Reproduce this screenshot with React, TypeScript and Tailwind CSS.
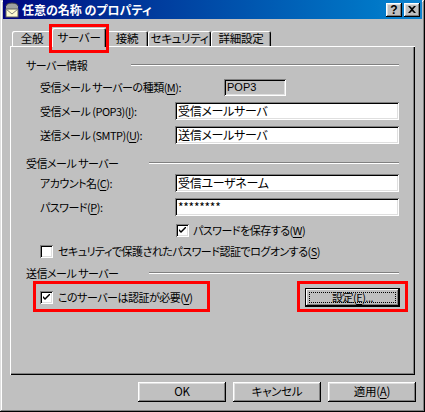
import React from 'react';

const font = "[font-family:'Noto_Sans_CJK_JP',sans-serif] [font-feature-settings:'palt']";

const raised =
  'shadow-[inset_-1px_-1px_#000,inset_1px_1px_#fff,inset_-2px_-2px_#808080,inset_2px_2px_#dfdfdf]';
const sunken =
  'shadow-[inset_1px_1px_#808080,inset_-1px_-1px_#fff,inset_2px_2px_#000,inset_-2px_-2px_#dfdfdf]';

const U = ({ children }: { children: React.ReactNode }) => <span className="underline underline-offset-2">{children}</span>;

const GroupHead = ({ label, w }: { label: string; w: string }) => (
  <div className="flex items-center h-[14px] pl-[16px]">
    <span className={`${w} shrink-0 leading-[14px]`}>{label}</span>
    <div className="h-[2px] flex-1 mr-[16px] border-t border-[#808080] border-b border-b-white" />
  </div>
);

const Input = ({ value }: { value: string }) => (
  <div className={`w-[224px] h-[18px] bg-white ${sunken} pl-[3px] leading-[18px] text-[12px] tracking-[-0.3px] overflow-hidden whitespace-nowrap`}>{value}</div>
);

const Check = ({ checked }: { checked: boolean }) => (
  <div className={`w-[13px] h-[13px] bg-white shrink-0 ${sunken} flex items-center justify-center`}>
    {checked && (
      <svg width="7" height="7" viewBox="0 0 7 7">
        <path d="M0 2 L0 4 L2 6 L7 1 L7 -1 L2 4 Z" fill="#000" />
      </svg>
    )}
  </div>
);

const FieldRow = ({ label, children, mt }: { label: React.ReactNode; children: React.ReactNode; mt: string }) => (
  <div className={`flex items-center ${mt} pl-[30px]`}>
    <span className="w-[135px] shrink-0 whitespace-nowrap">{label}</span>
    {children}
  </div>
);

const tabs = [
  { label: '全般', w: 'w-[40px]' },
  { label: 'サーバー', w: 'w-[54px]', active: true },
  { label: '接続', w: 'w-[42px]' },
  { label: 'セキュリティ', w: 'w-[63px]' },
  { label: '詳細設定', w: 'w-[60px]' },
];

export default function App() {
  return (
    <div
      className={`relative w-[425px] h-[412px] bg-[#c0c0c0] text-[11px] tracking-[-0.5px] text-black ${font} flex flex-col shadow-[inset_-1px_-1px_#000,inset_1px_1px_#dfdfdf,inset_-2px_-2px_#808080,inset_2px_2px_#fff] overflow-hidden`}
    >
      {/* title bar */}
      <div className="mx-[3px] h-[19px] bg-gradient-to-r from-[#000080] to-[#1084d0] flex items-center pl-[1px] pr-[2px]">
        <svg width="16" height="16" viewBox="0 0 16 16" className="shrink-0">
          <ellipse cx="8" cy="4" rx="6" ry="3" fill="#a0a0a0" stroke="#404040" />
          <rect x="2" y="4" width="12" height="3" fill="#a0a0a0" />
          <rect x="2" y="7" width="12" height="8" fill="#fffbd0" stroke="#606060" />
          <path d="M2 7 L8 12 L14 7" fill="none" stroke="#808080" />
        </svg>
        <span className="ml-[2px] text-white font-bold text-[12px] tracking-normal leading-[19px] whitespace-nowrap">任意の名称 のプロパティ</span>
        <div className="flex-1" />
        <div className={`w-[16px] h-[14px] bg-[#c0c0c0] ${raised} flex items-center justify-center font-bold text-[12px] tracking-normal leading-none [font-family:'Liberation_Sans',sans-serif]`}>?</div>
        <div className={`ml-[2px] w-[16px] h-[14px] bg-[#c0c0c0] ${raised} flex items-center justify-center`}>
          <svg width="8" height="7" viewBox="0 0 8 7">
            <path d="M0 0h2l2 2 2-2h2L5 3.5 8 7H6L4 5 2 7H0l3-3.5Z" fill="#000" />
          </svg>
        </div>
      </div>

      {/* tabs */}
      <div className="px-[10px] mt-[9px]">
        <div className="flex items-end h-[18px] pl-[2px] text-[11.5px] tracking-[-0.3px]">
          {tabs.map((t) =>
            t.active ? (
              <div
                key={t.label}
                className={`${t.w} h-[19px] -mb-[1px] z-10 relative bg-[#c0c0c0] rounded-t-[2px] shadow-[inset_1px_1px_#fff,inset_-1px_0_#000,inset_-2px_0_#808080] flex items-center justify-center leading-none whitespace-nowrap`}
              >
                {t.label}
              </div>
            ) : (
              <div
                key={t.label}
                className={`${t.w} h-[15px] bg-[#c0c0c0] rounded-t-[2px] shadow-[inset_1px_1px_#fff,inset_-1px_0_#000,inset_-2px_0_#808080] flex items-center justify-center leading-none whitespace-nowrap`}
              >
                {t.label}
              </div>
            )
          )}
        </div>

        {/* panel */}
        <div className="relative h-[329px] shadow-[inset_1px_1px_#fff,inset_-1px_-1px_#000,inset_-2px_-2px_#808080] pt-[12px]">
          <GroupHead label="サーバー情報" w="w-[105px]" />

          <FieldRow mt="mt-[7px]" label={<>受信メール サーバーの種類(<U>M</U>):</>}>
            <div className={`ml-[49px] w-[62px] h-[17px] ${sunken} pl-[3px] leading-[17px] tracking-normal [font-family:'Liberation_Sans',sans-serif]`}>POP3</div>
          </FieldRow>
          <FieldRow mt="mt-[6px]" label={<>受信メール (POP3)(<U>I</U>):</>}>
            <Input value="受信メールサーバ" />
          </FieldRow>
          <FieldRow mt="mt-[6px]" label={<>送信メール (SMTP)(<U>U</U>):</>}>
            <Input value="送信メールサーバ" />
          </FieldRow>

          <div className="mt-[12px]">
            <GroupHead label="受信メール サーバー" w="w-[123px]" />
          </div>
          <FieldRow mt="mt-[4px]" label={<>アカウント名(<U>C</U>):</>}>
            <Input value="受信ユーザネーム" />
          </FieldRow>
          <FieldRow mt="mt-[6px]" label={<>パスワード(<U>P</U>):</>}>
            <Input value="********" />
          </FieldRow>
          <div className="flex items-center h-[14px] mt-[7px] pl-[166px]">
            <Check checked />
            <span className="ml-[4px] whitespace-nowrap">パスワードを保存する(<U>W</U>)</span>
          </div>
          <div className="flex items-center h-[14px] mt-[7px] pl-[30px]">
            <Check checked={false} />
            <span className="ml-[5px] whitespace-nowrap">セキュリティで保護されたパスワード認証でログオンする(<U>S</U>)</span>
          </div>

          <div className="mt-[8px]">
            <GroupHead label="送信メール サーバー" w="w-[123px]" />
          </div>
          <div className="flex items-center h-[19px] mt-[8px] pl-[30px]">
            <Check checked />
            <span className="ml-[5px] whitespace-nowrap">このサーバーは認証が必要(<U>V</U>)</span>
            <div className="flex-1" />
            <div className="mr-[15px] w-[95px] h-[19px] bg-[#c0c0c0] border border-black shadow-[inset_-1px_-1px_#000,inset_1px_1px_#fff,inset_-2px_-2px_#808080] p-[3px]">
              <div className="h-full border border-dotted border-black flex items-center justify-center leading-none whitespace-nowrap">
                設定(<U>E</U>)...
              </div>
            </div>
          </div>

          {/* annotation boxes */}
          <div className="absolute left-[23px] top-[235px] w-[177px] h-[31px] border-[3px] border-[#ff0000]" />
          <div className="absolute left-[287px] top-[235px] w-[111px] h-[31px] border-[3px] border-[#ff0000]" />
        </div>
      </div>

      {/* bottom buttons */}
      <div className="flex justify-end gap-[7px] mt-[7px] pr-[9px] text-[11.5px] tracking-[-0.3px]">
        {[
          <>OK</>,
          <>キャンセル</>,
          <>適用(<U>A</U>)</>,
        ].map((c, i) => (
          <div key={i} className={`w-[88px] h-[20px] bg-[#c0c0c0] ${raised} flex items-center justify-center leading-none whitespace-nowrap`}>
            {c}
          </div>
        ))}
      </div>

      <div className="absolute left-[49px] top-[24px] w-[60px] h-[29px] border-[3px] border-[#ff0000] z-20" />
    </div>
  );
}
